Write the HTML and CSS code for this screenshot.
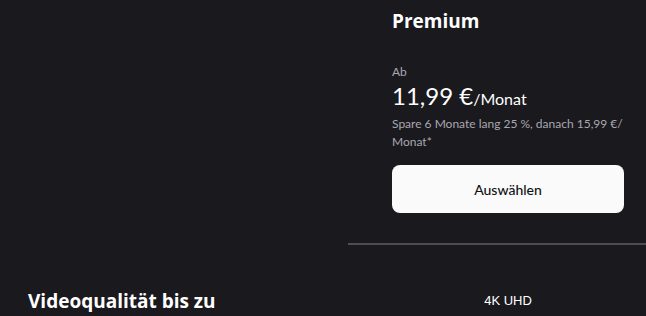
FILE: index.html
```html
<!DOCTYPE html>
<html lang="de">

<head>
  <meta charset="UTF-8">
  <meta name="viewport" content="width=device-width, initial-scale=1.0">
  <title>Premium</title>
  <link rel="stylesheet" href="styles.css">
</head>

<body>

  <section class="plans">
    <div class="plans-spacer"></div>

    <div class="plan">
      <h2 class="plan-name">Premium</h2>
      <p class="plan-from">Ab</p>
      <p class="plan-price">11,99 €<span>/Monat</span></p>
      <p class="plan-offer">Spare 6 Monate lang 25 %, danach 15,99 €/ Monat*</p>
      <button type="button" class="select-btn">Auswählen</button>
    </div>
  </section>

  <!-- Feature rows -->
  <section class="features">
    <div class="feature-row">
      <h3 class="feature-label">Videoqualität bis zu</h3>
      <p class="feature-value">4K UHD</p>
    </div>
  </section>

</body>

</html>
```

FILE: styles.css
```css
body {
  margin: 0;
  font-family: Lato, "Noto Sans", sans-serif;
  background: #1a191e;
  color: #fff;
  overflow: hidden;
}

/* Plan header */
.plans {
  display: grid;
  grid-template-columns: 348px 1fr;
}

.plan {
  padding: 10px 22px 30px 44px;
  border-bottom: 2px solid #4e4d56;
}

.plan-name {
  margin: 0;
  font-family: "Open Sans", Lato, sans-serif;
  font-size: 19px;
  font-weight: 700;
  line-height: 22px;
}

.plan-from {
  margin: 32px 0 0;
  font-size: 12px;
  line-height: 16px;
  color: #a9a8b0;
}

.plan-price {
  margin: 0;
  font-size: 24px;
  line-height: 32px;
}

.plan-price span {
  font-size: 16px;
}

.plan-offer {
  margin: 0;
  font-size: 12px;
  line-height: 18px;
  color: #a9a8b0;
}

.select-btn {
  display: block;
  width: 100%;
  height: 48px;
  margin-top: 14px;
  background: #fafafa;
  color: #111;
  border: none;
  border-radius: 8px;
  font-family: Lato, "Noto Sans", sans-serif;
  font-size: 14px;
  font-weight: 500;
  cursor: pointer;
}

/* Features */
.feature-row {
  display: grid;
  grid-template-columns: 392px 232px;
  padding-top: 45px;
}

.feature-label {
  margin: 0 0 0 28px;
  font-family: "Open Sans", Lato, sans-serif;
  font-size: 19px;
  font-weight: 700;
  line-height: 22px;
}

.feature-value {
  margin: 0;
  text-align: center;
  font-family: "Liberation Sans", Arial, sans-serif;
  font-size: 13px;
  line-height: 22px;
}
```
